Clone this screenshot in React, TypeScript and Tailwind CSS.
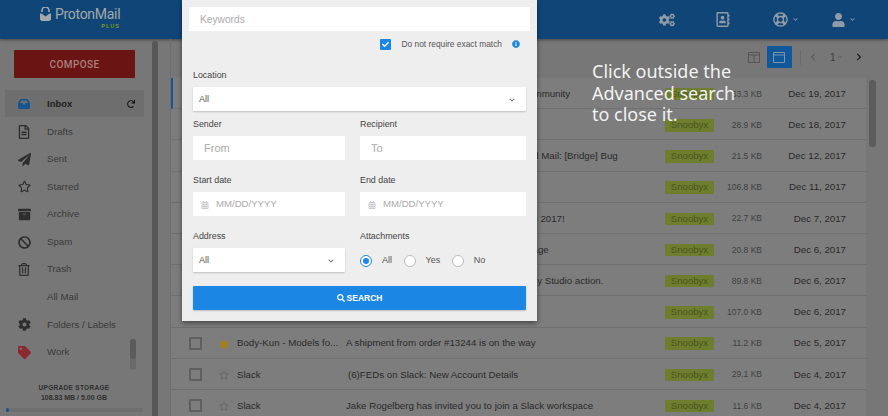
import {
  FaArchive, FaBan, FaCalendarAlt, FaCheck, FaChevronDown, FaChevronLeft, FaChevronRight, FaCog, FaCogs,
  FaInfoCircle, FaPaperPlane, FaRedo, FaRegAddressBook, FaRegFileAlt, FaRegLifeRing, FaRegStar, FaRegTrashAlt,
  FaSearch, FaStar, FaTag, FaUser,
} from "react-icons/fa";

const nav = [
  { name: "Drafts", icon: <FaRegFileAlt className="w-[12px] h-[14px]" /> },
  { name: "Sent", icon: <FaPaperPlane className="w-[13px] h-[13px]" /> },
  { name: "Starred", icon: <FaRegStar className="w-[13px] h-[13px]" /> },
  { name: "Archive", icon: <FaArchive className="w-[13px] h-[13px]" /> },
  { name: "Spam", icon: <FaBan className="w-[13px] h-[13px]" /> },
  { name: "Trash", icon: <FaRegTrashAlt className="w-[12px] h-[13px]" /> },
  { name: "All Mail", icon: null },
  { name: "Folders / Labels", icon: <FaCog className="w-[13px] h-[13px]" /> },
  { name: "Work", icon: <FaTag className="w-[13px] h-[13px] text-[#8a2a2f]" /> },
];

const rows = [
  { sender: "ProtonMail", star: false, subject: "Welcome to the ProtonMail Beta Testers Community", size: "63.3 KB", date: "Dec 19, 2017" },
  { sender: "Slack", star: false, subject: "Your weekly summary", size: "28.9 KB", date: "Dec 18, 2017" },
  { sender: "GitHub", star: false, subject: "Re: [Mozilla/thunderbird] Mozilla Thunderbird Mail: [Bridge] Bug", size: "21.5 KB", date: "Dec 12, 2017" },
  { sender: "Slack", star: false, subject: "Account details", size: "106.8 KB", date: "Dec 11, 2017" },
  { sender: "Unity", star: false, subject: "Join us at the end of the year for Unite Berlin 2017!", size: "22.7 KB", date: "Dec 7, 2017" },
  { sender: "Slack", star: false, subject: "You have received a new direct Slack message", size: "20.8 KB", date: "Dec 6, 2017" },
  { sender: "Unity", star: false, subject: "Get ready for some more hands-on new Unity Studio action.", size: "89.8 KB", date: "Dec 6, 2017" },
  { sender: "Slack", star: false, subject: "New sign in", size: "107.0 KB", date: "Dec 6, 2017" },
  { sender: "Body-Kun - Models fo...", star: true, subject: "A shipment from order #13244 is on the way", size: "11.2 KB", date: "Dec 5, 2017" },
  { sender: "Slack", star: false, subject: "(6)FEDs on Slack: New Account Details", size: "29.1 KB", date: "Dec 4, 2017", indent: true },
  { sender: "Slack", star: false, subject: "Jake Rogelberg has invited you to join a Slack workspace", size: "11.6 KB", date: "Dec 4, 2017" },
];

function Field({ label, children }: { label: string; children: React.ReactNode }) {
  return (
    <div>
      <div className="h-[13px] pt-[1px] text-[8.900px] leading-[13px] text-[#444]">{label}</div>
      <div className="mt-[6px]">{children}</div>
    </div>
  );
}

function Input({ text }: { text: string }) {
  return <div className="h-[24px] bg-white flex items-center pl-[11px] text-[11px] text-[#aaa]">{text}</div>;
}

function DateInput() {
  return (
    <div className="h-[24px] pt-[1px] bg-white flex items-center pl-[8px] text-[9.600px] text-[#aaa]">
      <FaCalendarAlt className="w-[8px] h-[8px] text-[#ccc] mr-[7px]" />
      MM/DD/YYYY
    </div>
  );
}

function Select() {
  return (
    <div className="h-[24px] pt-[1px] bg-white shadow-[0_1px_2px_rgba(0,0,0,0.2)] rounded-[1px] flex items-center justify-between pl-[6px] pr-[11px] text-[9px] text-[#555]">
      All
      <FaChevronDown className="w-[6px] h-[6px] text-[#777]" />
    </div>
  );
}

function Radio({ label, on }: { label: string; on?: boolean }) {
  return (
    <div className="flex items-center mr-[11.500px]">
      <span className={"w-[12px] h-[12px] rounded-full border flex items-center justify-center bg-white " + (on ? "border-[#1c86e5]" : "border-[#bbb]")}>
        {on && <span className="w-[6px] h-[6px] rounded-full bg-[#1c86e5]" />}
      </span>
      <span className="ml-[10px] text-[9px] text-[#555]">{label}</span>
    </div>
  );
}

export default function App() {
  return (
    <div className="relative w-[888px] h-[416px] overflow-hidden bg-[#777] font-['Liberation_Sans',Arial,sans-serif]">
      {/* header */}
      <header className="h-[39px] bg-[#0f4677] shadow-[0_1px_3px_rgba(0,0,0,0.4)] flex items-center justify-end text-[#8f9ba6] relative">
        <div className="absolute left-[40px] top-[6px] flex">
          <svg width="11" height="14" viewBox="0 0 11 14" className="mt-[1px]">
            <path d="M2 5V3.500a3.500 3.500 0 0 1 7 0V5" fill="none" stroke="#a3a8a8" strokeWidth="1.600" />
            <path d="M0 6.500h11v6l-1.500 1.500h-8L0 12.500zM1.500 6.500l4 3 4-3" fill="#a3a8a8" />
          </svg>
          <div className="ml-[4px] w-[65px]">
            <div className="text-[14px] leading-[17px] tracking-[-0.3px] whitespace-nowrap text-[#a3a8a8] font-['Roboto',sans-serif]">ProtonMail</div>
            <div className="text-[5.500px] leading-[6px] font-bold text-[#7f9a1a] text-right tracking-[1px]">PLUS</div>
          </div>
        </div>
        <FaCogs className="w-[16px] h-[14px]" />
        <FaRegAddressBook className="w-[14px] h-[15px] ml-[41px]" />
        <FaRegLifeRing className="w-[15px] h-[15px] ml-[43px]" />
        <FaChevronDown className="w-[5px] h-[5px] ml-[5px]" />
        <FaUser className="w-[13px] h-[14px] ml-[34px]" />
        <FaChevronDown className="w-[5px] h-[5px] ml-[5px] mr-[33px]" />
      </header>

      <div className="flex h-[377px]">
        {/* sidebar */}
        <aside className="relative w-[171px] shrink-0 border-r border-[#6e6e6e] pt-[11px]">
          <div className="ml-[14px] w-[121px] h-[28px] bg-[#6b1414] rounded-[1px] flex items-center justify-center text-[10px] font-['Roboto',sans-serif] font-medium tracking-[0.4px] text-[#ab8080]">
            COMPOSE
          </div>
          <div className="mt-[12px] mb-[1px] ml-[5px] w-[139px] h-[27px] pt-[1px] bg-[#6e6e6e] flex items-center pl-[13px] pr-[4px] text-[9.500px] font-bold text-[#1d1d1d]">
            <svg width="12" height="10" viewBox="0 0 12 10" className="mr-[17px] shrink-0">
              <path d="M2.500 0h7L12 4v4.500A1.500 1.500 0 0 1 10.500 10h-9A1.500 1.500 0 0 1 0 8.500V4zM2 4h2.500l1 1.500h1L7.500 4H10L8.700 1.500H3.300z" fill="#14558f" fillRule="evenodd" />
            </svg>
            <span className="flex-1">Inbox</span>
            <FaRedo className="w-[8px] h-[8px] text-[#111] mr-[5px]" />
          </div>
          {nav.map((item) => (
            <div key={item.name} className="ml-[5px] h-[27.600px] flex items-center text-[9.700px] text-[#3a3a3a]">
              <span className="w-[42px] pl-[12.500px] shrink-0 flex items-center text-[#2e2e2e]">{item.icon}</span>
              {item.name}
            </div>
          ))}
          <div className="absolute left-[130px] top-[300px] w-[6px] h-[31px] rounded-[3px] bg-[#6a6a6a]">
            <div className="w-[6px] h-[20px] rounded-[3px] bg-[#5b5b5b]" />
          </div>
          <div className="absolute left-[152px] top-[2px] bottom-0 w-[6px] rounded-t-[3px] bg-[#575757]" />
          <div className="absolute left-0 w-[148px] bottom-[4px] text-center text-[#2f2f2f] font-bold text-[6.500px] leading-[10px]">
            <div className="tracking-[0.3px]">UPGRADE STORAGE</div>
            <div className="text-[7px]">108.83 MB / 5.00 GB</div>
            <div className="mt-[5px] ml-[6px] w-[137px] h-[4px] rounded-[2px] bg-[#6e6e6e]">
              <div className="w-[3px] h-[4px] rounded-[2px] bg-[#14558f]" />
            </div>
          </div>
        </aside>

        {/* mail list */}
        <main className="flex-1 min-w-0">
          <div className="h-[39px] flex items-center justify-end pb-[3px] text-[#3c3c3c]">
            <svg width="12" height="11" viewBox="0 0 12 11" className="mr-[7px]">
              <path d="M.5.5h11v10H.5zM.5 3h11M6 3v7.500" fill="none" stroke="#555" />
            </svg>
            <div className="w-[25px] h-[22px] rounded-[1px] bg-[#10589a] flex items-center justify-center">
              <svg width="12" height="11" viewBox="0 0 12 11"><path d="M.5.5h11v10H.5zM.5 3h11" fill="none" stroke="#7f95a8" /></svg>
            </div>
            <div className="w-px h-[15px] bg-[#6a6a6a] ml-[8px]" />
            <FaChevronLeft className="w-[6px] h-[8px] ml-[9px] text-[#5c5c5c]" />
            <span className="ml-[14px] text-[10px] text-[#3c3c3c]">1</span>
            <FaChevronDown className="w-[4px] h-[4px] ml-[2.500px] text-[#555]" />
            <FaChevronRight className="w-[6px] h-[8px] ml-[14px] mr-[26px] text-[#1d1d1d]" />
          </div>
          <div className="flex">
            <div className="w-[695px] shrink-0">
              {rows.map((r, i) => (
                <div key={i} className={"relative h-[31.200px] pt-[2px] flex items-center bg-[#7d7d7d] border-b border-[#707070] text-[#2a2a2a] " + (i === 0 ? "border-l-2 border-l-[#14558f]" : "")}>
                  <span className={"w-[13px] h-[13px] rounded-[1px] border-2 border-[#5f5f5f] shrink-0 " + (i === 0 ? "ml-[16px]" : "ml-[18px]")} />
                  <span className="w-[14px] ml-[15px] shrink-0 flex justify-center">
                    {r.star ? <FaStar className="w-[10px] h-[10px] text-[#a87f12]" /> : <FaRegStar className="w-[10px] h-[10px] text-[#666]" />}
                  </span>
                  <span className="w-[109px] ml-[6px] shrink-0 text-[9.700px] truncate">{r.sender}</span>
                  <span className={"w-[319px] shrink-0 text-[9.700px] whitespace-nowrap " + (r.indent ? "pl-[2px]" : "")}>{r.subject}</span>
                  <span className="w-[49px] h-[12.500px] rounded-[1px] bg-[#6f7d2e] text-[#47551f] text-[9.600px] leading-[12.500px] text-center shrink-0">Snoobyx</span>
                  <span className="w-[48px] text-right text-[8.500px] text-[#3f3f3f] shrink-0">{r.size}</span>
                  <span className="w-[84px] text-right text-[9.700px] shrink-0">{r.date}</span>
                </div>
              ))}
            </div>
            <div className="ml-[3px] mt-[2px] w-[7px] h-[67px] rounded-[3px] bg-[#5c5c5c]" />
          </div>
        </main>
      </div>

      {/* advanced search */}
      <div className="absolute left-[182px] top-0 w-[355px] h-[321px] bg-[#eee] shadow-[0_2px_5px_rgba(0,0,0,0.45)] pt-[7px] px-[7px]">
        <div className="h-[24px] pt-[1px] bg-white pl-[11px] flex items-center text-[10.200px] text-[#aaa]">Keywords</div>
        <div className="mt-[7px] h-[12px] flex items-center justify-end pr-[10px] text-[8.400px] text-[#555]">
          <span className="w-[11px] h-[11px] rounded-[1px] bg-[#1c86e5] flex items-center justify-center mr-[10px]">
            <FaCheck className="w-[7px] h-[7px] text-white" />
          </span>
          Do not require exact match
          <FaInfoCircle className="w-[8px] h-[8px] ml-[10px] text-[#1c86e5]" />
        </div>
        <div className="px-[4px] pt-[18px]">
          <Field label="Location"><Select /></Field>
          <div className="grid grid-cols-[152px_166px] gap-x-[15px] gap-y-[13px] mt-[6px]">
            <Field label="Sender"><Input text="From" /></Field>
            <Field label="Recipient"><Input text="To" /></Field>
            <Field label="Start date"><DateInput /></Field>
            <Field label="End date"><DateInput /></Field>
            <Field label="Address"><Select /></Field>
            <Field label="Attachments">
              <div className="h-[24px] pt-[1px] flex items-center"><Radio label="All" on /><Radio label="Yes" /><Radio label="No" /></div>
            </Field>
          </div>
          <div className="mt-[14px] h-[24px] bg-[#1c86e5] rounded-[1px] shadow-[0_1px_2px_rgba(0,0,0,0.2)] flex items-center justify-center text-white text-[8.500px] font-bold">
            <FaSearch className="w-[8px] h-[8px] mr-[2px]" />
            SEARCH
          </div>
        </div>
      </div>

      {/* hint */}
      <div className="absolute left-[592px] top-[61px] w-[150px] text-[18px] leading-[21.500px] text-[#f2f2f2] font-['Noto_Sans',sans-serif]">
        Click outside the Advanced search to close it.
      </div>
    </div>
  );
}
